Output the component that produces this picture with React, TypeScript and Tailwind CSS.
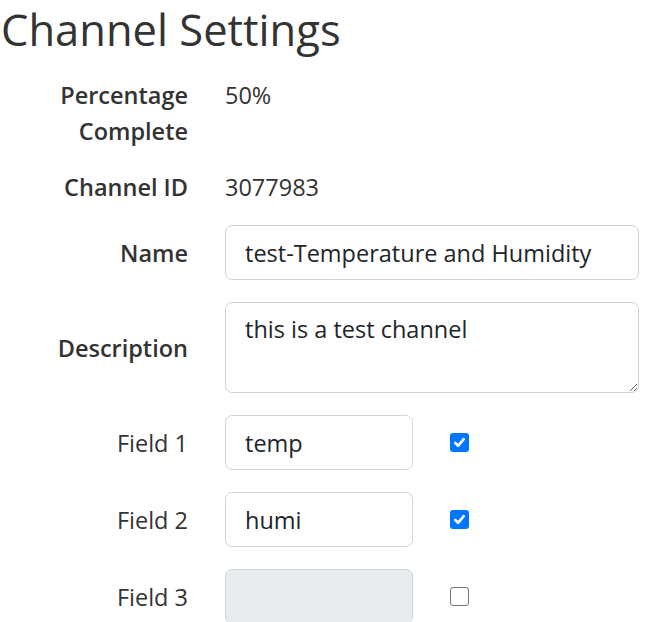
import type { ReactNode } from "react";

const font = { fontFamily: "'Open Sans', 'Noto Sans', sans-serif" };

function Check({ checked }: { checked: boolean }) {
  if (!checked) {
    return <span className="block h-[19px] w-[19px] rounded-[3px] border-[1.5px] border-[#767676] bg-white" />;
  }
  return (
    <span className="flex h-[19px] w-[19px] items-center justify-center rounded-[3px] bg-[#0075ff]">
      <svg viewBox="0 0 16 16" className="h-[15px] w-[15px]">
        <path d="M3.5 8.5l3 3 6-7" fill="none" stroke="white" strokeWidth="2.8" strokeLinecap="round" strokeLinejoin="round" />
      </svg>
    </span>
  );
}

function Row({ label, bold, children, top }: { label: ReactNode; bold?: boolean; children: ReactNode; top?: boolean }) {
  return (
    <div className={`flex ${top ? "items-start" : "items-center"}`}>
      <div className={`w-[188px] shrink-0 text-right leading-[36px] ${bold ? "font-semibold" : ""}`}>{label}</div>
      <div className="ml-[37px] flex items-center">{children}</div>
    </div>
  );
}

const inputCls =
  "h-[55px] rounded-[7px] border border-[#ced4da] px-[19px] text-[23.5px] leading-[36px] text-[#212529] outline-none";

export default function App() {
  return (
    <div className="h-[622px] w-[669px] overflow-hidden bg-white text-[23.5px] text-[#333]" style={font}>
      <h2 className="h-[60px] pl-[1px] text-[43.5px] font-normal leading-[60px] text-[#333]">Channel Settings</h2>

      <div className="mt-[17px] flex flex-col">
        <Row label={<>Percentage<br />Complete</>} bold top>
          <span className="leading-[36px]">50%</span>
        </Row>
        <div className="mt-[20px]">
          <Row label="Channel ID" bold>
            <span className="leading-[36px]">3077983</span>
          </Row>
        </div>
        <div className="mt-[20px]">
          <Row label="Name" bold>
            <input readOnly value="test-Temperature and Humidity" className={`${inputCls} w-[414px] bg-white`} style={font} />
          </Row>
        </div>
        <div className="mt-[22px]">
          <Row label="Description" bold>
            <textarea
              readOnly
              value="this is a test channel"
              className="h-[91px] w-[414px] resize rounded-[7px] border border-[#ced4da] bg-white px-[19px] py-[8px] text-[23.5px] leading-[36px] text-[#212529] outline-none"
              style={font}
            />
          </Row>
        </div>
        {[
          { n: 1, v: "temp", on: true },
          { n: 2, v: "humi", on: true },
          { n: 3, v: "", on: false },
        ].map((f) => (
          <div key={f.n} className="mt-[22px]">
            <Row label={`Field ${f.n}`}>
              <input
                readOnly
                disabled={!f.v}
                value={f.v}
                className={`${inputCls} w-[188px] ${f.v ? "bg-white" : "bg-[#e9ecef]"}`}
                style={font}
              />
              <span className="ml-[37px]">
                <Check checked={f.on} />
              </span>
            </Row>
          </div>
        ))}
      </div>
    </div>
  );
}
